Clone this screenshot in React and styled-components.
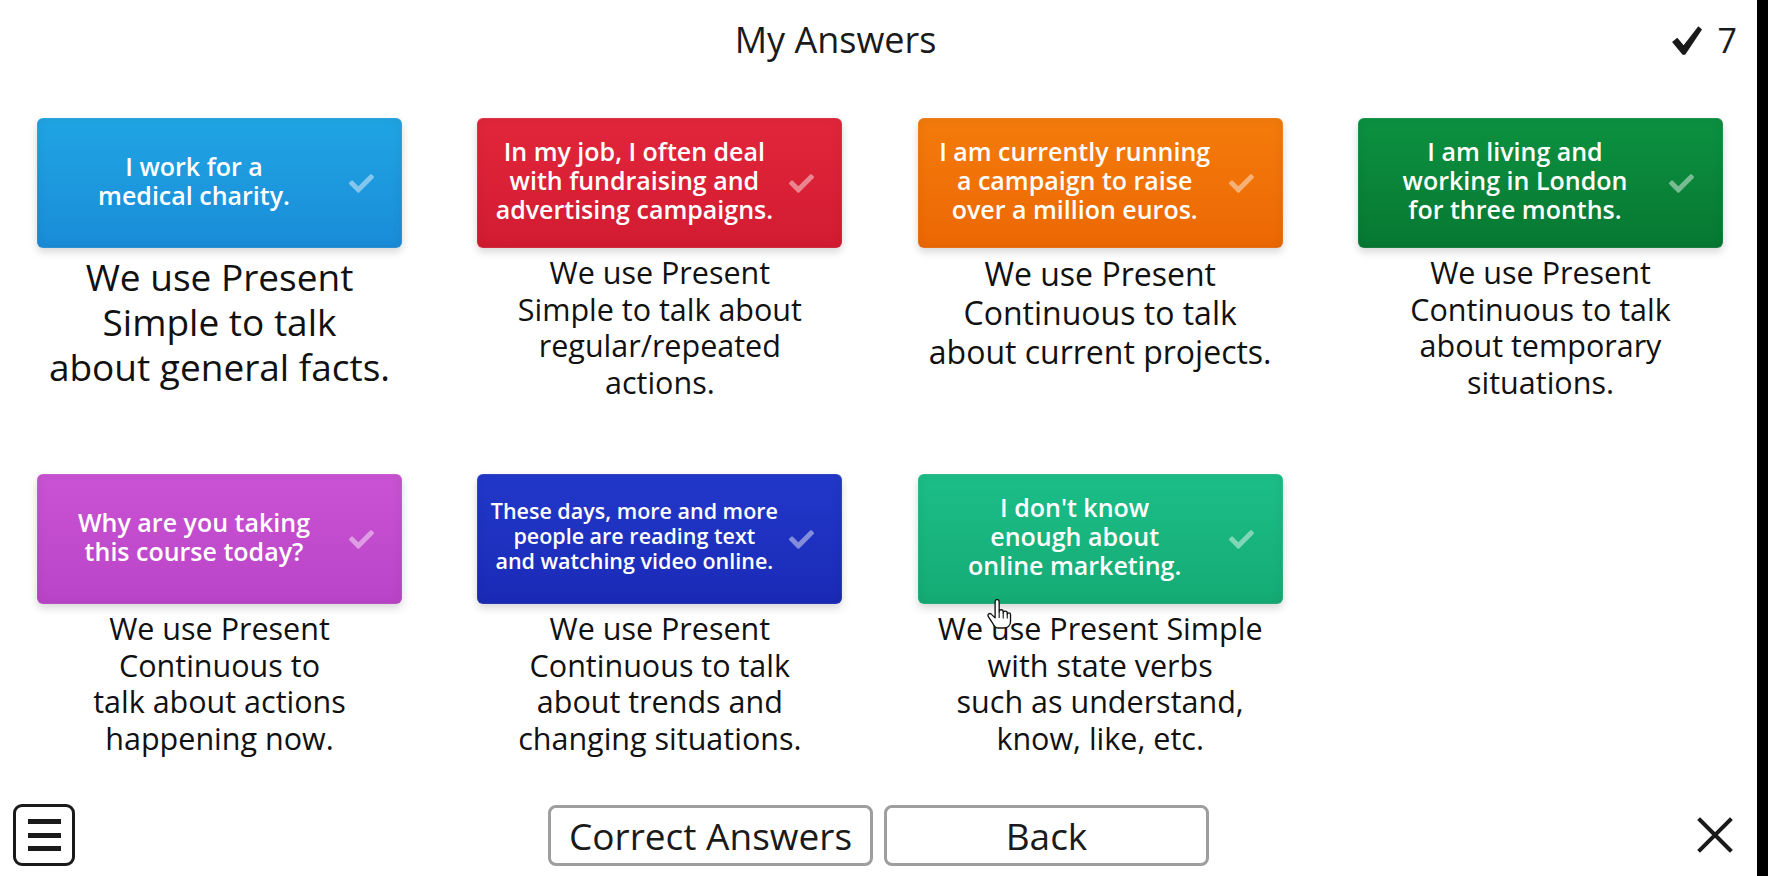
import React from 'react'
import styled, { createGlobalStyle } from 'styled-components'

const GlobalStyle = createGlobalStyle`
  html, body {
    margin: 0;
    padding: 0;
    background: #fff;
    overflow: hidden;
  }
  body {
    font-family: "Open Sans", "Liberation Sans", sans-serif;
    color: #1a1a1a;
  }
`

const Frame = styled.div`
  display: flex;
  width: 100vw;
  height: 100vh;
`

const Screen = styled.div`
  position: relative;
  flex: 1;
  display: flex;
  flex-direction: column;
  background: #fff;
`

const EdgeBar = styled.div`
  width: 11px;
  background: #000;
`

const Header = styled.header`
  display: flex;
  align-items: center;
  height: 80px;
`

const Title = styled.h1`
  flex: 1;
  margin: 0;
  text-align: center;
  font-size: 36px;
  font-weight: 400;
  line-height: 46px;
  color: #1a1a1a;
`

const Score = styled.div`
  width: 86px;
  display: flex;
  align-items: center;
  justify-content: flex-end;
  gap: 15px;
  padding-right: 20px;
  box-sizing: border-box;
  font-size: 34px;
  line-height: 46px;
  color: #1a1a1a;
`

const Grid = styled.main`
  flex: 1;
  display: grid;
  grid-template-columns: repeat(4, 365px);
  grid-template-rows: repeat(2, 283px);
  justify-content: space-between;
  align-content: start;
  row-gap: 73px;
  padding: 38px 34px 0 37px;
`

const Cell = styled.div`
  display: flex;
  flex-direction: column;
  align-items: center;
`

const Card = styled.div`
  width: 100%;
  height: 130px;
  display: flex;
  align-items: center;
  padding: 0 21px 0 10px;
  box-sizing: border-box;
  border-radius: 6px;
  background: linear-gradient(180deg, ${p => p.$top} 0%, ${p => p.$bottom} 100%);
  box-shadow:
    inset 0 0 0 1px rgba(255, 255, 255, 0.08),
    inset 0 0 12px rgba(0, 0, 0, 0.07),
    0 4px 8px rgba(0, 0, 0, 0.16);
`

const CardText = styled.div`
  flex: 1;
  min-width: 0;
  padding-bottom: 5px;
  text-align: center;
  white-space: pre;
  color: #fff;
  font-weight: 600;
  font-size: ${p => p.$size}px;
  line-height: 1.16;
`

const CheckWrap = styled.div`
  width: 40px;
  flex-shrink: 0;
  display: flex;
  justify-content: center;
  align-items: center;
  color: rgba(255, 255, 255, 0.45);
`

const Desc = styled.p`
  margin: 6px 0 0;
  text-align: center;
  white-space: pre;
  color: #111;
  font-size: ${p => p.$size}px;
  line-height: ${p => p.$lh}px;
`

const Footer = styled.footer`
  display: grid;
  grid-template-columns: 1fr auto 1fr;
  align-items: center;
  height: 90px;
  padding: 18px 0 10px;
  box-sizing: border-box;
`

const MenuButton = styled.button`
  justify-self: start;
  margin-left: 13px;
  width: 62px;
  height: 62px;
  padding: 0;
  display: flex;
  flex-direction: column;
  align-items: center;
  justify-content: center;
  gap: 8.5px;
  border: 3px solid #1a1a1a;
  border-radius: 9px;
  background: #fff;
  box-sizing: border-box;
`

const MenuLine = styled.span`
  display: block;
  width: 33px;
  height: 5px;
  background: #1a1a1a;
`

const Buttons = styled.div`
  display: flex;
  gap: 11px;
`

const Button = styled.button`
  width: 325px;
  height: 61px;
  border: 3px solid #9e9e9e;
  border-radius: 8px;
  background: #fff;
  font-family: "Open Sans", "Liberation Sans", sans-serif;
  font-size: 37px;
  color: #1a1a1a;
  padding: 0;
  line-height: 1;
`

const CloseButton = styled.button`
  justify-self: end;
  margin-right: 24px;
  width: 36px;
  height: 36px;
  padding: 0;
  border: 0;
  background: transparent;
  display: flex;
`

const Cursor = styled.svg`
  position: absolute;
  left: 987px;
  top: 599px;
  width: 25px;
  height: 31px;
  pointer-events: none;
`

const items = [
  {
    top: '#20a5e4', bottom: '#1a8cd8',
    text: 'I work for a\nmedical charity.',
    desc: 'We use Present\nSimple to talk\nabout general facts.',
    size: 37, lh: 45,
  },
  {
    top: '#e2263b', bottom: '#d21b31',
    text: 'In my job, I often deal\nwith fundraising and\nadvertising campaigns.',
    desc: 'We use Present\nSimple to talk about\nregular/repeated\nactions.',
  },
  {
    top: '#f47b0b', bottom: '#ec6804',
    text: 'I am currently running\na campaign to raise\nover a million euros.',
    desc: 'We use Present\nContinuous to talk\nabout current projects.',
    size: 32, lh: 39,
  },
  {
    top: '#0c9140', bottom: '#077832',
    text: 'I am living and\nworking in London\nfor three months.',
    desc: 'We use Present\nContinuous to talk\nabout temporary\nsituations.',
  },
  {
    top: '#ca53d4', bottom: '#ba44c7',
    text: 'Why are you taking\nthis course today?',
    desc: 'We use Present\nContinuous to\ntalk about actions\nhappening now.',
  },
  {
    top: '#2238ca', bottom: '#1a2ab6',
    text: 'These days, more and more\npeople are reading text\nand watching video online.',
    textSize: 21.5,
    desc: 'We use Present\nContinuous to talk\nabout trends and\nchanging situations.',
  },
  {
    top: '#1cbe88', bottom: '#15ab75',
    text: "I don't know\nenough about\nonline marketing.",
    desc: 'We use Present Simple\nwith state verbs\nsuch as understand,\nknow, like, etc.',
  },
]

function CardCheck() {
  return (
    <svg width="25" height="21" viewBox="0 64 512 384" fill="currentColor">
      <path d="M173.898 439.404l-166.4-166.4c-9.997-9.997-9.997-26.206 0-36.204l36.203-36.204c9.997-9.998 26.207-9.998 36.204 0L192 312.69 432.095 72.596c9.997-9.997 26.207-9.997 36.204 0l36.203 36.204c9.997 9.997 9.997 26.206 0 36.204l-294.4 294.401c-9.998 9.997-26.207 9.997-36.204-.001z" />
    </svg>
  )
}

function ScoreCheck() {
  return (
    <svg width="33" height="31" viewBox="0 0 30 28" fill="#1a1a1a">
      <path d="M1 15.5 L6 11.5 L12 18.5 L26 0.5 L29.5 3.5 L13.5 27.5 L11 27.5 Z" />
    </svg>
  )
}

export default function App() {
  return (
    <Frame>
      <GlobalStyle />
      <Screen>
        <Header>
          <Title>My Answers</Title>
          <Score>
            <ScoreCheck />
            <span>7</span>
          </Score>
        </Header>

        <Grid>
          {items.map((it, i) => (
            <Cell key={i}>
              <Card $top={it.top} $bottom={it.bottom}>
                <CardText $size={it.textSize || 25}>{it.text}</CardText>
                <CheckWrap>
                  <CardCheck />
                </CheckWrap>
              </Card>
              <Desc $size={it.size || 30.5} $lh={it.lh || 36.7}>{it.desc}</Desc>
            </Cell>
          ))}
        </Grid>

        <Footer>
          <MenuButton aria-label="Menu">
            <MenuLine />
            <MenuLine />
            <MenuLine />
          </MenuButton>
          <Buttons>
            <Button>Correct Answers</Button>
            <Button>Back</Button>
          </Buttons>
          <CloseButton aria-label="Close">
            <svg width="36" height="36" viewBox="0 0 36 36" stroke="#1a1a1a" strokeWidth="4" strokeLinecap="square">
              <path d="M3 3 L33 33 M33 3 L3 33" />
            </svg>
          </CloseButton>
        </Footer>

        <Cursor viewBox="0 0 18.5 22">
          <path
            d="M6 1.5 a1.5 1.5 0 0 1 3 0 V9 a1.5 1.5 0 0 1 3 0 V10 a1.5 1.5 0 0 1 3 0 V11 a1.2 1.2 0 0 1 2.4 0 V16 c0 3 -2 5 -5 5 H8.5 c-2 0 -3 -1 -4 -3 L1 12.5 a1.4 1.4 0 0 1 2.3 -1.6 L6 13.5 Z"
            fill="#fff"
            stroke="#111"
            strokeWidth="1"
            strokeLinejoin="round"
          />
          <path d="M9 9 V13.5 M12 10 V14 M15 11 V14" stroke="#111" strokeWidth="0.8" fill="none" />
        </Cursor>
      </Screen>
      <EdgeBar />
    </Frame>
  )
}
